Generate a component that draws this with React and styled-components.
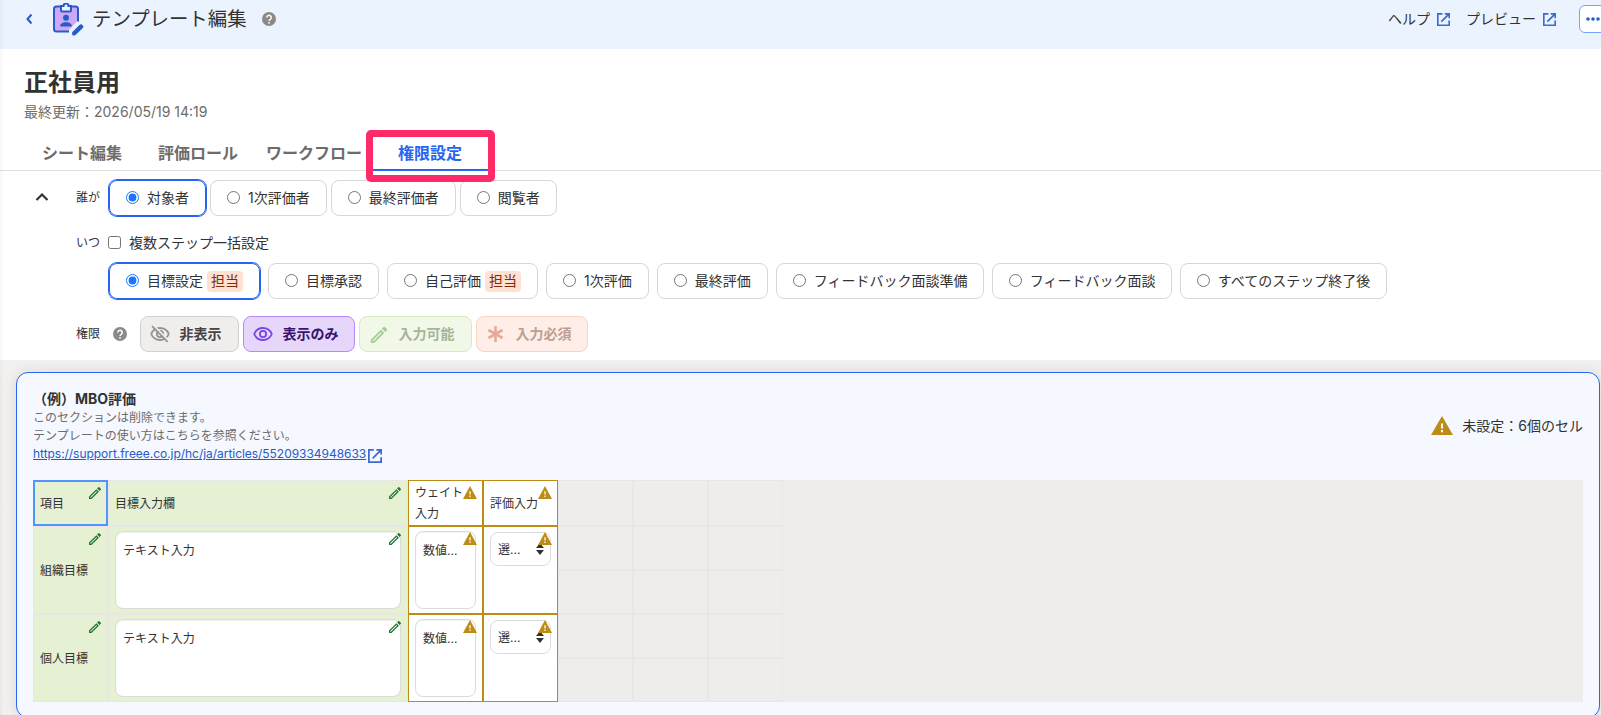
import React from "react";
import styled, { createGlobalStyle, css } from "styled-components";

const GlobalStyle = createGlobalStyle`
  * { box-sizing: border-box; }
  html, body { margin: 0; padding: 0; }
  body {
    height: 715px;
    overflow: hidden;
    background: #f2f1f0;
    color: #323232;
    font-family: Inter, "Noto Sans CJK JP", sans-serif;
    font-size: 14px;
    line-height: 1.5;
  }
  svg { display: block; flex: none; }
`;

const Page = styled.div`
  position: relative;
  width: 1601px;
  height: 715px;
  overflow: hidden;
  display: flex;
  flex-direction: column;
`;

const EdgeShadow = styled.div`
  position: absolute;
  inset: 0 auto 0 0;
  width: 4px;
  background: linear-gradient(to right, rgba(0, 0, 0, 0.03), rgba(0, 0, 0, 0));
  z-index: 3;
`;

const Header = styled.header`
  flex: none;
  height: 49px;
  padding: 0 0 11px 23px;
  background: #ebf3ff;
  display: flex;
  align-items: center;
  justify-content: space-between;
`;

const HeaderGroup = styled.div`
  display: flex;
  align-items: center;
`;

const AppIcon = styled.div`
  margin-left: 15px;
`;

const PageTitle = styled.h1`
  margin: 0 15px 0 8px;
  font-size: 19.4px;
  font-weight: 400;
  line-height: 30px;
`;

const HeaderLink = styled.a`
  display: flex;
  align-items: center;
  gap: 7px;
  margin-right: 16px;
  font-size: 14px;
`;

const LinkText = styled.span`
  padding-bottom: 2px;
`;

const MoreButton = styled.button`
  width: 36px;
  height: 28px;
  margin: 0 -14px 0 7px;
  padding: 0 0 0 6px;
  border: 1px solid #73a5ff;
  border-radius: 6px;
  background: #fff;
  display: flex;
  align-items: center;
`;

const Main = styled.main`
  flex: none;
  height: 311px;
  background: #fff;
  display: flex;
  flex-direction: column;
`;

const Intro = styled.div`
  padding: 16px 24px 0;
  height: 80px;
`;

const SheetName = styled.h2`
  margin: 0;
  font-size: 24px;
  font-weight: 700;
  line-height: 36px;
`;

const Updated = styled.p`
  margin: 0;
  color: #6e6b69;
  font-size: 14px;
  line-height: 21px;
`;

const Tabs = styled.nav`
  display: flex;
  height: 42px;
  padding-left: 24px;
  border-bottom: 1px solid #e1dfde;
`;

const Tab = styled.a`
  position: relative;
  padding: 12px 18px 0;
  height: 42px;
  margin-left: ${(p) => p.$shift || 0}px;
  font-size: 16px;
  font-weight: 700;
  line-height: 24px;
  color: ${(p) => (p.$active ? "#2864f0" : "#6e6b69")};
  ${(p) =>
    p.$active &&
    css`
      padding: 12px 26px 0 25px;
      border-bottom: 2px solid #2864f0;
    `}
`;

const Highlight = styled.span`
  position: absolute;
  left: -7px;
  top: 1px;
  width: 129px;
  height: 52px;
  border: 7px solid #ff2a68;
  border-radius: 5px;
  z-index: 2;
`;

const Settings = styled.section`
  display: flex;
  padding: 9px 0 0 34px;
`;

const Collapse = styled.button`
  width: 16px;
  height: 16px;
  margin: 9px 26px 0 0;
  padding: 0;
  border: 0;
  background: none;
`;

const Fields = styled.div`
  display: flex;
  flex-direction: column;
`;

const Field = styled.div`
  display: flex;
  align-items: ${(p) => (p.$top ? "flex-start" : "center")};
  margin-bottom: ${(p) => p.$after}px;
`;

const FieldLabel = styled.span`
  width: ${(p) => p.$w || 33}px;
  flex: none;
  font-size: 12px;
  line-height: 18px;
  padding-top: ${(p) => p.$drop || 0}px;
  padding-bottom: ${(p) => p.$raise || 0}px;
`;

const FieldBody = styled.div`
  display: flex;
  flex-direction: column;
  gap: 10px;
`;

const Options = styled.div`
  display: flex;
  gap: ${(p) => p.$gap}px;
  margin-left: ${(p) => p.$indent || 0}px;
`;

const OptionBox = styled.label`
  display: flex;
  align-items: center;
  height: 36px;
  width: ${(p) => (p.$w ? `${p.$w}px` : "auto")};
  padding: 0 16px;
  white-space: nowrap;
  border: 1px solid ${(p) => (p.$on ? "#2864f0" : "#d9d7d6")};
  border-radius: 8px;
  box-shadow: ${(p) => (p.$on ? "0 0 0 1px #2864f0" : "none")};
  input {
    margin: 0 8px 2px 0;
    width: 13px;
    height: 13px;
    flex: none;
    accent-color: #1976ff;
  }
`;

const OptionText = styled.span`
  line-height: 21px;
  padding-bottom: 1px;
`;

const Badge = styled.span`
  margin-left: 4px;
  padding: 0 4px;
  height: 21px;
  line-height: 20px;
  border-radius: 4px;
  background: #ffe1d2;
  color: #7d2d0a;
`;

const CheckLabel = styled.label`
  display: flex;
  align-items: center;
  height: 21px;
  margin-left: -1px;
  line-height: 21px;
  input {
    margin: 0 8px 0 0;
    width: 13px;
    height: 13px;
  }
`;

const PermButton = styled.button`
  display: flex;
  align-items: center;
  height: 36px;
  width: ${(p) => p.$w}px;
  padding: 0 0 0 9px;
  gap: 9.5px;
  border: 1px solid ${(p) => p.$line};
  border-radius: 8px;
  background: ${(p) => p.$bg};
  color: ${(p) => p.$fg};
  font: inherit;
  font-weight: 700;
  white-space: nowrap;
`;

const PermText = styled.span`
  padding-bottom: 2px;
`;

const Workspace = styled.div`
  flex: 1;
  padding: 12px 1px 0 16px;
`;

const Card = styled.section`
  height: 346px;
  padding: 16px 16px 0;
  border: 1px solid #2864f0;
  border-radius: 12px;
  background: #f5f8ff;
  box-shadow: 0 0 14px rgba(0, 0, 0, 0.1);
`;

const CardHead = styled.div`
  display: flex;
  justify-content: space-between;
  height: 91px;
`;

const CardTitle = styled.h3`
  margin: 0;
  font-size: 14px;
  font-weight: 700;
  line-height: 20px;
`;

const CardNote = styled.p`
  margin: 0;
  font-size: 12px;
  line-height: 18px;
  color: #6e6b69;
`;

const CardLink = styled.a`
  display: flex;
  align-items: center;
  gap: 2px;
  font-size: 12px;
  line-height: 18px;
  letter-spacing: -0.04px;
  color: #285ac8;
  text-decoration: underline;
  svg { margin-top: 4px; }
`;

const Unset = styled.div`
  display: flex;
  align-items: center;
  gap: 9px;
  height: 21px;
  margin-top: 26px;
`;

const Grid = styled.div`
  display: grid;
  grid-template-columns: 75px 300px repeat(5, 75px) 1fr;
  grid-template-rows: 46px repeat(4, 44px);
  background: #eeedec;
`;

const toneStyle = {
  green: css`background: #e6f0d2; border-color: #e8e6e6;`,
  selected: css`background: #e6f0d2; border: 2px solid #5096fa; padding: 0 5px;`,
  unset: css`background: #fff; border-color: #be8c14;`,
  empty: css`border-color: #e8e7e7;`,
};

const Cell = styled.div`
  position: relative;
  grid-column: ${(p) => p.$col};
  grid-row: ${(p) => p.$row} / span ${(p) => p.$span || 1};
  display: flex;
  align-items: ${(p) => (p.$top ? "flex-start" : "center")};
  padding: ${(p) => (p.$top ? "4px 6px 0" : "0 6px")};
  border: 1px solid;
  font-size: 12px;
  line-height: 21px;
  ${(p) => toneStyle[p.$tone]}
`;

const Mark = styled.span`
  position: absolute;
  top: ${(p) => p.$inset}px;
  right: ${(p) => p.$inset}px;
`;

const WarnMarkBox = styled(Mark)`
  top: 5px;
  right: 5px;
`;

const TextBox = styled.div`
  flex: 1;
  height: 78px;
  padding: 8px 7px;
  border: 1px solid #dddbda;
  border-radius: 8px;
  background: #fff;
  box-shadow: inset 0 1px 1px rgba(0, 0, 0, 0.06);
  white-space: nowrap;
`;

const SelectBox = styled.div`
  flex: 1;
  display: flex;
  align-items: center;
  justify-content: space-between;
  height: 34px;
  margin-top: 1px;
  padding: 0 6px 0 7px;
  border: 1px solid #dddbda;
  border-radius: 8px;
  background: #fff;
`;

const PERMS = [
  { id: "hide", label: "非表示", bg: "#f0eeed", line: "#d2d0cf", fg: "#464342", icon: "#96928f", w: 99 },
  { id: "view", label: "表示のみ", bg: "#e6d7fa", line: "#b48cf5", fg: "#37146e", icon: "#7846e6", w: 112 },
  { id: "input", label: "入力可能", bg: "#f1f8e8", line: "#d7ebbe", fg: "#a5b49b", icon: "#a5cd96", w: 113 },
  { id: "required", label: "入力必須", bg: "#ffeee8", line: "#fad2be", fg: "#be9e92", icon: "#e6ab98", w: 112 },
];

const Help = ({ size = 14 }) => (
  <svg width={size} height={size} viewBox="0 0 24 24">
    <circle cx="12" cy="12" r="12" fill="#8c8986" />
    <path d="M8.2 9.4a3.8 3.8 0 1 1 6 3.1c-1.5 1-2.2 1.5-2.2 3" fill="none" stroke="#fff" strokeWidth="2.6" />
    <circle cx="12" cy="18.6" r="1.6" fill="#fff" />
  </svg>
);

const External = ({ size = 13 }) => (
  <svg width={size} height={size} viewBox="0 0 12 12" fill="none" stroke="#3a6ad6" strokeWidth="1.5">
    <path d="M5 .75H.75v10.5h10.5V7M7.2 .75h4.05V4.8M11 1 4 8" />
  </svg>
);

const OutlinePencil = ({ size, color, box = "3 3 18 18" }) => (
  <svg width={size} height={size} viewBox={box} fill={color}>
    <path d="M14.06 9.02l.92.92L5.92 19H5v-.92l9.06-9.06M17.66 3c-.25 0-.51.1-.7.29l-1.83 1.83 3.75 3.75 1.83-1.83c.39-.39.39-1.02 0-1.41l-2.34-2.34c-.2-.2-.45-.29-.71-.29zm-3.6 3.19L3 17.25V21h3.75L17.81 9.94l-3.75-3.75z" />
  </svg>
);

const Warning = ({ w, h }) => (
  <svg width={w} height={h} viewBox="0 0 22 19" preserveAspectRatio="none">
    <path d="M11 0 22 19H0z" fill="#be8c14" />
    <path d="M10 7.5h2v5h-2zM10 14h2v2.2h-2z" fill="#fff" />
  </svg>
);

const Eye = ({ color, off }) => (
  <svg width="20" height="20" viewBox="0 0 20 20" fill="none" stroke={color} strokeWidth="1.8">
    <path d="M1.2 10C2.8 6.2 6 4 10 4s7.2 2.2 8.8 6c-1.6 3.8-4.8 6-8.8 6s-7.2-2.2-8.8-6z" />
    <circle cx="10" cy="10" r="3.1" />
    {off && <path d="M3.2 1.2 19 17" stroke="#f0eeed" strokeWidth="1.8" />}
    {off && <path d="M2 2.2 17.6 17.8" />}
  </svg>
);

const Asterisk = ({ color }) => (
  <svg width="20" height="20" viewBox="0 0 20 20" fill="none" stroke={color} strokeWidth="2.6">
    <path d="M9.5 2v16M2.4 6l14.2 8M16.6 6 2.4 14" />
  </svg>
);

const Clipboard = () => (
  <svg width="32" height="33" viewBox="0 0 32 33">
    <rect x="2" y="3.500" width="24" height="25" rx="2.5" fill="#cda8f6" stroke="#285ac8" strokeWidth="2" />
    <path d="M9 3h2.500a2.3 2.3 0 0 1 5 0H19v4.500a1 1 0 0 1-1 1h-8a1 1 0 0 1-1-1z" fill="#ebf3ff" stroke="#285ac8" strokeWidth="2" />
    <circle cx="14" cy="14.8" r="3" fill="#285ac8" />
    <path d="M8.3 23.500c-.5-2.6 2-4.200 5.700-4.200s6.200 1.600 5.700 4.200z" fill="#285ac8" />
    <path d="M17 32.5V27L25 18.500h7v8l-7 6z" fill="#ebf3ff" />
    <path d="M22.5 30 29 23.700" stroke="#285ac8" strokeWidth="4.5" strokeLinecap="round" />
    <path d="M20.300 32.5l.5-4 3 3.500z" fill="#285ac8" />
  </svg>
);

const PermIcon = ({ id, color }) => {
  if (id === "input") return <OutlinePencil size={20} box="1 0 22 22" color={color} />;
  if (id === "required") return <Asterisk color={color} />;
  return <Eye off={id === "hide"} color={color} />;
};

const Option = ({ on, name, label, badge, w }) => (
  <OptionBox $on={on} $w={w}>
    <input type="radio" name={name} defaultChecked={on} />
    <OptionText>{label}</OptionText>
    {badge && <Badge>担当</Badge>}
  </OptionBox>
);

const PencilMark = ({ inset = 6 }) => (
  <Mark $inset={inset}>
    <OutlinePencil size={12} color="#1e7832" />
  </Mark>
);

const WarnMark = () => (
  <WarnMarkBox>
    <Warning w={14} h={13} />
  </WarnMarkBox>
);

const GoalRow = ({ row, name }) => (
  <>
    <Cell $col={1} $row={row} $span={2} $tone="green">{name}<PencilMark /></Cell>
    <Cell $col={2} $row={row} $span={2} $tone="green" $top><TextBox>テキスト入力</TextBox><PencilMark /></Cell>
    <Cell $col={3} $row={row} $span={2} $tone="unset" $top><TextBox>数値...</TextBox><WarnMark /></Cell>
    <Cell $col={4} $row={row} $span={2} $tone="unset" $top>
      <SelectBox>
        選...
        <svg width="8" height="12" viewBox="0 0 8 12"><path d="M4 0l4 5H0zM4 12 0 7h8z" fill="#323232" /></svg>
      </SelectBox>
      <WarnMark />
    </Cell>
  </>
);

export default function App() {
  return (
    <Page>
      <GlobalStyle />
      <EdgeShadow />
      <Header>
        <HeaderGroup>
          <svg width="14" height="14" viewBox="0 0 14 14" fill="none" stroke="#285ac8" strokeWidth="2">
            <path d="M8.5 2.5 4.5 7l4 4.5" />
          </svg>
          <AppIcon><Clipboard /></AppIcon>
          <PageTitle>テンプレート編集</PageTitle>
          <Help />
        </HeaderGroup>
        <HeaderGroup>
          <HeaderLink><LinkText>ヘルプ</LinkText><External /></HeaderLink>
          <HeaderLink><LinkText>プレビュー</LinkText><External /></HeaderLink>
          <MoreButton>
            <svg width="14" height="4" viewBox="0 0 14 4" fill="#285ac8">
              <circle cx="2" cy="2" r="1.8" /><circle cx="7" cy="2" r="1.8" /><circle cx="12" cy="2" r="1.8" />
            </svg>
          </MoreButton>
        </HeaderGroup>
      </Header>
      <Main>
        <Intro>
          <SheetName>正社員用</SheetName>
          <Updated>最終更新：2026/05/19 14:19</Updated>
        </Intro>
        <Tabs>
          <Tab>シート編集</Tab>
          <Tab>評価ロール</Tab>
          <Tab $shift={-8}>ワークフロー</Tab>
          <Tab $active $shift={-7}>権限設定<Highlight /></Tab>
        </Tabs>
        <Settings>
          <Collapse>
            <svg width="16" height="16" viewBox="0 0 16 16" fill="none" stroke="#323232" strokeWidth="2.2">
              <path d="M2.500 11 8 5.500l5.500 5.500" />
            </svg>
          </Collapse>
          <Fields>
            <Field $after={16}>
              <FieldLabel $raise={1}>誰が</FieldLabel>
              <Options $gap={4}>
                <Option name="who" on label="対象者" />
                <Option name="who" label="1次評価者" />
                <Option name="who" label="最終評価者" />
                <Option name="who" label="閲覧者" />
              </Options>
            </Field>
            <Field $top $after={17}>
              <FieldLabel $drop={2}>いつ</FieldLabel>
              <FieldBody>
                <CheckLabel><input type="checkbox" />複数ステップ一括設定</CheckLabel>
                <Options $gap={8}>
                  <Option name="when" on label="目標設定" badge />
                  <Option name="when" label="目標承認" />
                  <Option name="when" label="自己評価" badge />
                  <Option name="when" label="1次評価" />
                  <Option name="when" label="最終評価" />
                  <Option name="when" label="フィードバック面談準備" w={208} />
                  <Option name="when" label="フィードバック面談" w={180} />
                  <Option name="when" label="すべてのステップ終了後" w={207} />
                </Options>
              </FieldBody>
            </Field>
            <Field $after={0}>
              <FieldLabel $w={37} $raise={1}>権限</FieldLabel>
              <Help />
              <Options $gap={4} $indent={13}>
                {PERMS.map((p) => (
                  <PermButton key={p.id} $bg={p.bg} $line={p.line} $fg={p.fg} $w={p.w}>
                    <PermIcon id={p.id} color={p.icon} />
                    <PermText>{p.label}</PermText>
                  </PermButton>
                ))}
              </Options>
            </Field>
          </Fields>
        </Settings>
      </Main>
      <Workspace>
        <Card>
          <CardHead>
            <div>
              <CardTitle>（例）MBO評価</CardTitle>
              <CardNote>このセクションは削除できます。</CardNote>
              <CardNote>テンプレートの使い方はこちらを参照ください。</CardNote>
              <CardLink>https://support.freee.co.jp/hc/ja/articles/55209334948633<External size={14} /></CardLink>
            </div>
            <Unset><Warning w={22} h={19} />未設定：6個のセル</Unset>
          </CardHead>
          <Grid>
            <Cell $col={1} $row={1} $tone="selected">項目<PencilMark inset={5} /></Cell>
            <Cell $col={2} $row={1} $tone="green">目標入力欄<PencilMark /></Cell>
            <Cell $col={3} $row={1} $tone="unset">ウェイト<br />入力<WarnMark /></Cell>
            <Cell $col={4} $row={1} $tone="unset">評価入力<WarnMark /></Cell>
            <GoalRow row={2} name="組織目標" />
            <GoalRow row={4} name="個人目標" />
            {[1, 2, 3, 4, 5].map((r) =>
              [5, 6, 7].map((c) => <Cell key={`${r}-${c}`} $col={c} $row={r} $tone="empty" />)
            )}
          </Grid>
        </Card>
      </Workspace>
    </Page>
  );
}
